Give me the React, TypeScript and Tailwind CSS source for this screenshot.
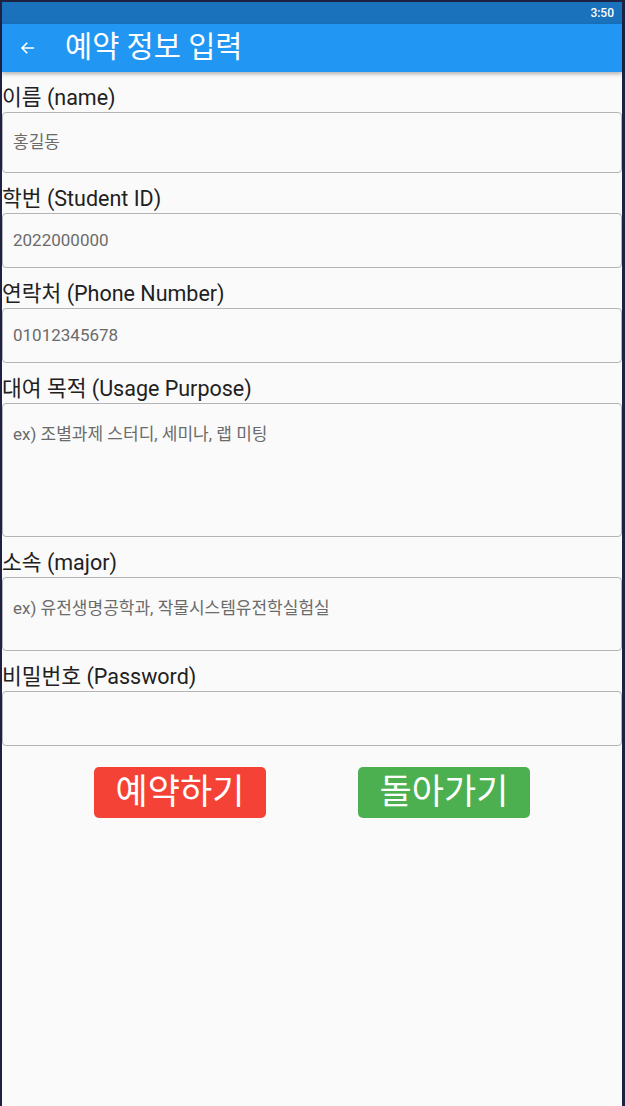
import React from "react";

const font = { fontFamily: "Roboto, 'Noto Sans CJK KR', sans-serif" };

function Label({ children }: { children: React.ReactNode }) {
  return (
    <div className="pt-[14px] pb-[2px] text-[21.5px] leading-[24px] text-[#212121]">{children}</div>
  );
}

function Field({ h, placeholder, top }: { h: string; placeholder?: string; top?: boolean }) {
  return (
    <div
      className={`${h} w-full rounded-[4px] border border-[#b5b5b5] flex px-[10px] text-[17px] text-[#6b6b6b] ${
        top ? "items-start pt-[18px]" : "items-center"
      }`}
    >
      {placeholder}
    </div>
  );
}

export default function App() {
  return (
    <div className="w-[625px] h-[1106px] bg-[#1f2142] pt-[2px] pl-[2px] pr-[3px]" style={font}>
      <div className="h-[1104px] bg-[#fafafa] flex flex-col">
        <div className="h-[22px] bg-[#1a72bd] flex items-center justify-end pr-[8px] text-white text-[12px] font-medium">
          3:50
        </div>
        <div className="h-[48px] bg-[#2196f3] flex items-center shadow-[0_2px_4px_rgba(0,0,0,0.3)] relative z-10">
          <svg width="18" height="18" viewBox="0 0 24 24" className="ml-[17px]" fill="none" stroke="white" strokeWidth="2.2">
            <path d="M20 12H5M11 5l-7 7 7 7" />
          </svg>
          <div className="ml-[28px] text-white text-[29.5px] leading-none">예약 정보 입력</div>
        </div>
        <div className="flex flex-col">
          <Label>이름 (name)</Label>
          <Field h="h-[61px]" placeholder="홍길동" />
          <Label>학번 (Student ID)</Label>
          <Field h="h-[55px]" placeholder="2022000000" />
          <Label>연락처 (Phone Number)</Label>
          <Field h="h-[55px]" placeholder="01012345678" />
          <Label>대여 목적 (Usage Purpose)</Label>
          <Field h="h-[134px]" placeholder="ex) 조별과제 스터디, 세미나, 랩 미팅" top />
          <Label>소속 (major)</Label>
          <Field h="h-[74px]" placeholder="ex) 유전생명공학과, 작물시스템유전학실험실" top />
          <Label>비밀번호 (Password)</Label>
          <Field h="h-[55px]" />
          <div className="flex justify-evenly mt-[21px]">
            <button className="w-[172px] h-[51px] rounded-[5px] bg-[#f44336] text-white text-[35px] leading-none">
              예약하기
            </button>
            <button className="w-[172px] h-[51px] rounded-[5px] bg-[#4caf50] text-white text-[35px] leading-none">
              돌아가기
            </button>
          </div>
        </div>
      </div>
    </div>
  );
}
